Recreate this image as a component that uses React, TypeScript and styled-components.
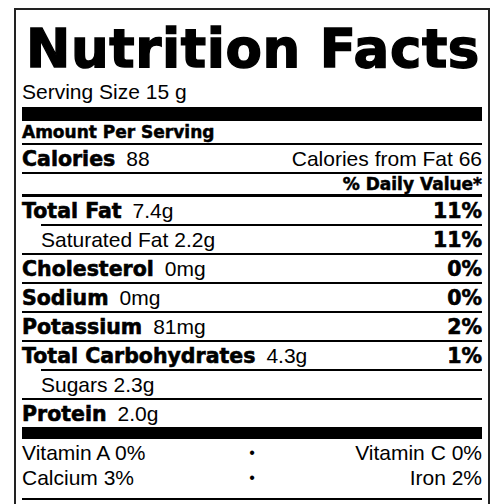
import * as React from "react";
import styled, { createGlobalStyle } from "styled-components";

type Nutrient = {
  name: string;
  amount: string;
  pct?: string;
  sub?: boolean;
  rule: "thin" | "indent" | "bar";
};

const nutrients: Nutrient[] = [
  { name: "Total Fat", amount: "7.4g", pct: "11%", rule: "indent" },
  { name: "Saturated Fat", amount: "2.2g", pct: "11%", sub: true, rule: "thin" },
  { name: "Cholesterol", amount: "0mg", pct: "0%", rule: "thin" },
  { name: "Sodium", amount: "0mg", pct: "0%", rule: "thin" },
  { name: "Potassium", amount: "81mg", pct: "2%", rule: "thin" },
  { name: "Total Carbohydrates", amount: "4.3g", pct: "1%", rule: "indent" },
  { name: "Sugars", amount: "2.3g", sub: true, rule: "thin" },
  { name: "Protein", amount: "2.0g", rule: "bar" },
];

const vitamins = [
  ["Vitamin A 0%", "Vitamin C 0%"],
  ["Calcium 3%", "Iron 2%"],
];

const App = () => {
  return (
    <>
      <GlobalStyle />
      <Label>
        <Title>Nutrition Facts</Title>
        <Serving>Serving Size 15 g</Serving>
        <Rule $size={14} />
        <SmallHead>Amount Per Serving</SmallHead>
        <Rule $size={2} />
        <Row>
          <Left>
            <Name>Calories</Name>
            <Amount>88</Amount>
          </Left>
          <Amount>Calories from Fat 66</Amount>
        </Row>
        <Rule $size={2} />
        <SmallHead $right>% Daily Value*</SmallHead>
        <Rule $size={3} />
        {nutrients.map((n) => (
          <React.Fragment key={n.name}>
            <Row $sub={n.sub}>
              <Left $sub={n.sub}>
                {n.sub ? <Amount>{n.name}</Amount> : <Name>{n.name}</Name>}
                <Amount>{n.amount}</Amount>
              </Left>
              {n.pct && <Name>{n.pct}</Name>}
            </Row>
            {n.rule === "bar" ? (
              <Rule $size={12} />
            ) : (
              <Rule $size={2} $indent={n.rule === "indent"} />
            )}
          </React.Fragment>
        ))}
        <Vitamins>
          {vitamins.map(([a, b]) => (
            <React.Fragment key={a}>
              <span>{a}</span>
              <Dot>•</Dot>
              <RightCell>{b}</RightCell>
            </React.Fragment>
          ))}
        </Vitamins>
        <Rule $size={2} />
      </Label>
    </>
  );
};

export default App;

const GlobalStyle = createGlobalStyle`
  body {
    margin: 0;
    background: #fff;
  }
`;

const Label = styled.section`
  box-sizing: border-box;
  width: 476px;
  margin: 8px 0 0 14px;
  padding: 0 6px 24px;
  border: 2px solid #222;
  font-family: "Liberation Sans", Arial, sans-serif;
  color: #000;
`;

const Title = styled.h1`
  margin: 0;
  padding: 9px 0 0 4px;
  font-family: "DejaVu Sans", sans-serif;
  font-weight: 700;
  font-size: 53px;
  line-height: 60px;
  letter-spacing: 0.6px;
  -webkit-text-stroke: 1.4px #000;
  white-space: nowrap;
`;

const Serving = styled.div`
  font-size: 21px;
  line-height: 26px;
  margin-bottom: 2px;
`;

const Rule = styled.div<{ $size: number; $indent?: boolean }>`
  height: ${(p) => p.$size}px;
  margin-left: ${(p) => (p.$indent ? 19 : 0)}px;
  background: #000;
`;

const SmallHead = styled.div<{ $right?: boolean }>`
  font-family: "DejaVu Sans", sans-serif;
  font-weight: 700;
  font-size: 17px;
  line-height: 22px;
  -webkit-text-stroke: 0.5px #000;
  text-align: ${(p) => (p.$right ? "right" : "left")};
  ${(p) => p.$right && "line-height: 20px;"}
`;

const Row = styled.div<{ $sub?: boolean }>`
  display: flex;
  justify-content: space-between;
  align-items: baseline;
  height: 27px;
  line-height: 27px;
  padding-left: ${(p) => (p.$sub ? 19 : 0)}px;
`;

const Left = styled.div<{ $sub?: boolean }>`
  display: flex;
  align-items: baseline;
  gap: ${(p) => (p.$sub ? 6 : 11)}px;
`;

const Name = styled.span`
  font-family: "DejaVu Sans", sans-serif;
  font-weight: 700;
  font-size: 20.5px;
  -webkit-text-stroke: 0.6px #000;
`;

const Amount = styled.span`
  font-size: 21px;
`;

const Vitamins = styled.div`
  display: grid;
  grid-template-columns: 1fr auto 1fr;
  font-size: 21px;
  line-height: 25px;
  padding-top: 1px;
  margin-bottom: 8px;
`;

const Dot = styled.span`
  font-size: 16px;
  text-align: center;
`;

const RightCell = styled.span`
  text-align: right;
`;
